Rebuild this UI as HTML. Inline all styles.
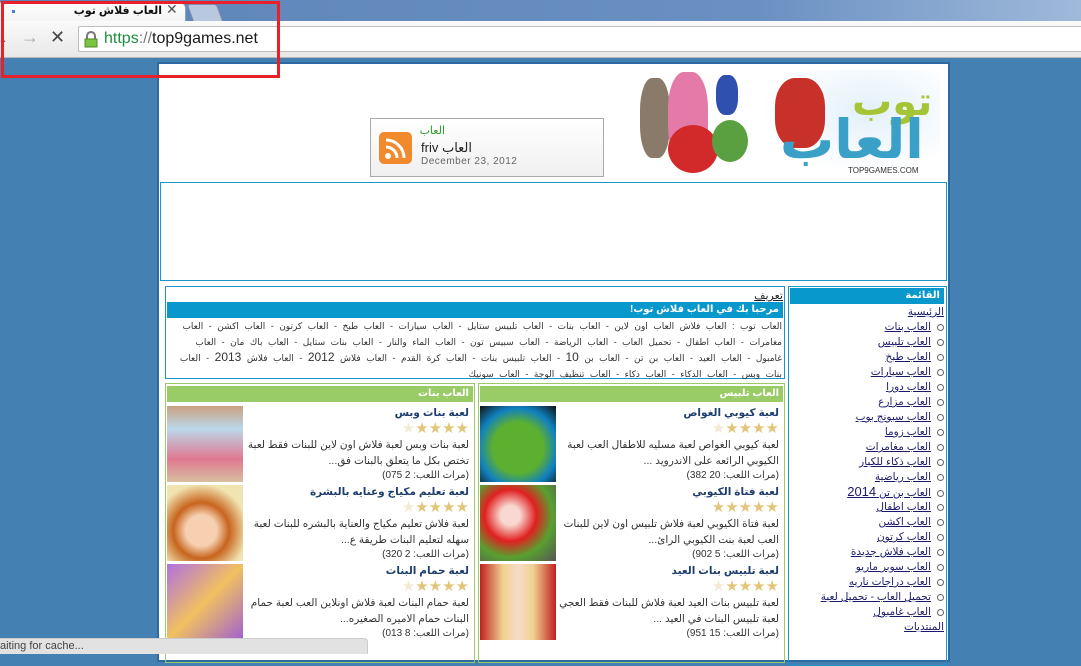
<!DOCTYPE html>
<html><head><meta charset="utf-8">
<style>
*{margin:0;padding:0;box-sizing:border-box}
body{width:1081px;height:654px;overflow:hidden;position:relative;background:#4580b3;font-family:"Liberation Sans","DejaVu Sans",sans-serif;font-size:11px;color:#333}
.a{position:absolute}
.ar{direction:rtl;text-align:right}
.tabbar{left:0;top:0;width:1081px;height:24px;background:linear-gradient(90deg,#5d84b8 0%,#6a90c2 70%,#9fb9da 100%)}
.toolbar{left:0;top:21px;width:1081px;height:37px;background:linear-gradient(#fafafa,#e8e8e8);border-bottom:1px solid #b8b8b8}
.omni{left:78px;top:26px;width:1010px;height:26px;background:#fff;border:1px solid #bdbdbd;border-radius:2px}
.page{left:157px;top:62px;width:793px;height:600px;background:#fff;border:2px solid #2d6aa2}
.bl{border:1px solid #1b95c8}
.gb{border:1px solid #99cc66}
.ghead{background:#99cc66;color:#fff;font-weight:bold;height:16px;line-height:16px;padding-right:4px;font-size:10px}
.bhead{background:#0898cc;color:#fff;font-weight:bold;height:16px;line-height:16px;padding-right:4px}
.menu a{display:block;color:#1a1a6a;text-decoration:underline;height:15px;line-height:15px;font-size:10.5px;overflow:hidden;white-space:nowrap}
.menu a.b::before{content:"";display:inline-block;width:5px;height:5px;border:1px solid #666;border-radius:50%;margin-left:6px;vertical-align:middle}
.game{position:absolute;height:79px}
.game .img{position:absolute;width:76px;height:76px}
.game .t{font-weight:bold;color:#1d3d6d;font-size:10.5px;line-height:14px}
.stars{color:#e3c57a;font-size:15px;line-height:17px}
.game p{font-size:10.5px;line-height:16px;color:#333;letter-spacing:-0.2px}
</style></head><body>
<div class="a tabbar"></div>
<div class="a" style="left:-10px;top:2px;width:196px;height:24px;background:linear-gradient(#fdfdfd,#f2f2f2);border-radius:6px 6px 0 0;border:1px solid #8aa4c8"></div>
<div class="a" style="left:12px;top:10px;width:3px;height:3px;background:#4a7fd8"></div>
<div class="a ar" style="left:60px;top:4px;width:102px;font-weight:bold;color:#111;font-size:11px;white-space:nowrap">العاب فلاش توب</div>
<div class="a" style="left:166px;top:1px;font-size:14px;color:#555">✕</div>
<div class="a" style="left:190px;top:4px;width:30px;height:18px;background:#b8c9df;border:1px solid #88a;transform:skewX(20deg);border-radius:3px 3px 0 0"></div>
<div class="a toolbar"></div>
<div class="a" style="left:0;top:30px;font-size:18px;color:#666">-</div>
<div class="a" style="left:21px;top:27px;font-size:18px;color:#aaa">→</div>
<div class="a" style="left:50px;top:27px;font-size:18px;color:#444;font-weight:bold">✕</div>
<div class="a omni"></div>
<svg class="a" style="left:84px;top:31px" width="14" height="17"><path d="M3 8V5a4 4 0 0 1 8 0v3" fill="none" stroke="#777" stroke-width="2"/><rect x="1" y="8" width="12" height="8" fill="#7cc342" stroke="#4e8a28"/></svg>
<div class="a" style="left:104px;top:30px;font-size:16px;color:#1a1a1a"><span style="color:#1e8f3e">https</span><span style="color:#777">://</span>top9games.net</div>

<div class="a page"></div>
<div class="a" style="left:370px;top:118px;width:234px;height:59px;border:1px solid #aaa;background:linear-gradient(#fff,#f0f0f0)"></div>
<div class="a" style="left:379px;top:132px;width:33px;height:32px;background:#f08a2c;border-radius:5px"></div>
<svg class="a" style="left:383px;top:136px" width="25" height="25"><circle cx="5" cy="20" r="3" fill="#fff"/><path d="M3 11a11 11 0 0 1 11 11M3 4a18 18 0 0 1 18 18" fill="none" stroke="#fff" stroke-width="3"/></svg>
<div class="a ar" style="left:415px;top:124px;width:30px;color:#2a9a2a;font-size:11px">العاب</div>
<div class="a" style="left:421px;top:140px;font-size:13px;color:#222">friv <span>العاب</span></div>
<div class="a" style="left:421px;top:156px;font-size:10px;color:#666;letter-spacing:.5px">December 23, 2012</div>
<div class="a" style="left:760px;top:70px;width:180px;height:104px;background:radial-gradient(ellipse at 60% 40%,#e2f0fa,#fff 70%)"></div>
<div class="a" style="left:640px;top:78px;width:30px;height:80px;background:#8a7a6a;border-radius:40%"></div>
<div class="a" style="left:668px;top:72px;width:40px;height:90px;background:#e47aa8;border-radius:40%"></div>
<div class="a" style="left:668px;top:125px;width:50px;height:48px;background:#d22a2a;border-radius:50%"></div>
<div class="a" style="left:712px;top:120px;width:36px;height:42px;background:#5aa040;border-radius:50%"></div>
<div class="a" style="left:716px;top:75px;width:22px;height:40px;background:#3050b0;border-radius:40%"></div>
<div class="a" style="left:775px;top:78px;width:50px;height:70px;background:#c8302a;border-radius:40%"></div>
<div class="a" style="left:852px;top:80px;font-size:40px;font-weight:bold;color:#a5c536;line-height:44px">توب</div>
<div class="a" style="left:780px;top:112px;font-size:54px;font-weight:bold;color:#3aa0c8;line-height:56px">العاب</div>
<div class="a" style="left:848px;top:166px;font-size:8px;color:#333">TOP9GAMES.COM</div>

<div class="a bl" style="left:160px;top:182px;width:787px;height:99px"></div>

<div class="a bl" style="left:165px;top:286px;width:620px;height:93px"></div>
<div class="a ar" style="left:700px;top:289px;width:83px;text-decoration:underline;color:#222">تعريف</div>
<div class="a bhead ar" style="left:167px;top:302px;width:616px;font-size:10px">مرحبا بك في العاب فلاش توب!</div>
<div class="a ar" style="left:170px;top:319px;width:612px;line-height:15.5px;font-size:9px;word-spacing:3px;color:#333">العاب توب : العاب فلاش العاب اون لاين - العاب بنات - العاب تلبيس ستايل - العاب سيارات - العاب طبخ - العاب كرتون - العاب اكشن - العاب مغامرات - العاب اطفال - تحميل العاب - العاب الرياضة - العاب سبيس تون - العاب الماء والنار - العاب بنات ستايل - العاب باك مان - العاب غامبول - العاب العيد - العاب بن تن - العاب بن <span style="font-size:12px">10</span> - العاب تلبيس بنات - العاب كرة القدم - العاب فلاش <span style="font-size:12px">2012</span> - العاب فلاش <span style="font-size:12px">2013</span> - العاب بنات وبس - العاب الذكاء - العاب ذكاء - العاب تنظيف الوجة - العاب سونيك</div>

<div class="a bl" style="left:788px;top:286px;width:159px;height:380px"></div>
<div class="a bhead ar" style="left:790px;top:288px;width:154px;font-size:10px">القائمة</div>
<div class="a menu ar" style="left:792px;top:305px;width:152px">
<a>الرئيسية</a><a class="b">العاب بنات</a><a class="b">العاب تلبيس</a><a class="b">العاب طبخ</a><a class="b">العاب سيارات</a><a class="b">العاب دورا</a><a class="b">العاب مزارع</a><a class="b">العاب سبونج بوب</a><a class="b">العاب زوما</a><a class="b">العاب مغامرات</a><a class="b">العاب ذكاء للكبار</a><a class="b">العاب رياضية</a><a class="b">العاب بن تن <span style="font-size:13px;line-height:13px">2014</span></a><a class="b">العاب اطفال</a><a class="b">العاب اكشن</a><a class="b">العاب كرتون</a><a class="b">العاب فلاش جديدة</a><a class="b">العاب سوبر ماريو</a><a class="b">العاب دراجات ناريه</a><a class="b">تحميل العاب - تحميل لعبة</a><a class="b">العاب غامبول</a><a>المنتديات</a>
</div>

<div class="a gb" style="left:165px;top:383px;width:310px;height:280px"></div>
<div class="a gb" style="left:478px;top:383px;width:307px;height:280px"></div>
<div class="a ghead ar" style="left:167px;top:386px;width:306px">العاب بنات</div>
<div class="a ghead ar" style="left:480px;top:386px;width:303px">العاب تلبيس</div>

<div class="game" style="left:167px;top:406px;width:306px"><div class="img" style="left:0;top:0;background:linear-gradient(#c8a080 0,#bcd8ea 30%,#e07890 70%,#d8c0a0)"></div>
<div class="ar" style="position:absolute;right:4px;top:0;width:222px"><div class="t">لعبة بنات وبس</div><div class="stars">★★★★<span style="color:#f2ead2">★</span></div><p>لعبة بنات وبس لعبة فلاش اون لاين للبنات فقط لعبة تختص بكل ما يتعلق بالبنات فق...</p><p style="font-size:10px;line-height:13px">(مرات اللعب: 2 075)</p></div></div>
<div class="game" style="left:167px;top:485px;width:306px"><div class="img" style="left:0;top:0;background:radial-gradient(circle at 45% 60%,#f6d0b0 25%,#c8641e 45%,#f0e4b0 75%)"></div>
<div class="ar" style="position:absolute;right:4px;top:0;width:222px"><div class="t">لعبة تعليم مكياج وعنايه بالبشرة</div><div class="stars">★★★★<span style="color:#f2ead2">★</span></div><p>لعبة فلاش تعليم مكياج والعناية بالبشره للبنات لعبة سهله لتعليم البنات طريقة ع...</p><p style="font-size:10px;line-height:13px">(مرات اللعب: 2 320)</p></div></div>
<div class="game" style="left:167px;top:564px;width:306px"><div class="img" style="left:0;top:0;background:linear-gradient(135deg,#b070e0,#f0c060 50%,#a060d0)"></div>
<div class="ar" style="position:absolute;right:4px;top:0;width:222px"><div class="t">لعبة حمام البنات</div><div class="stars">★★★★<span style="color:#f2ead2">★</span></div><p>لعبة حمام البنات لعبة فلاش اونلاين العب لعبة حمام البنات حمام الاميره الصغيره...</p><p style="font-size:10px;line-height:13px">(مرات اللعب: 8 013)</p></div></div>

<div class="game" style="left:480px;top:406px;width:303px"><div class="img" style="left:0;top:0;background:radial-gradient(circle at 50% 55%,#5cb030 45%,#1080c0 70%,#111)"></div>
<div class="ar" style="position:absolute;right:4px;top:0;width:220px"><div class="t">لعبة كيوبي الغواص</div><div class="stars">★★★★<span style="color:#f2ead2">★</span></div><p>لعبة كيوبي الغواص لعبة مسليه للاطفال العب لعبة الكيوبي الرائعه على الاندرويد ...</p><p style="font-size:10px;line-height:13px">(مرات اللعب: 20 382)</p></div></div>
<div class="game" style="left:480px;top:485px;width:303px"><div class="img" style="left:0;top:0;background:radial-gradient(circle at 40% 40%,#f8d8d0 15%,#e02020 40%,#58a030 65%,#555)"></div>
<div class="ar" style="position:absolute;right:4px;top:0;width:220px"><div class="t">لعبة فتاة الكيوبي</div><div class="stars">★★★★★</div><p>لعبة فتاة الكيوبي لعبة فلاش تلبيس اون لاين للبنات العب لعبة بنت الكيوبي الرائ...</p><p style="font-size:10px;line-height:13px">(مرات اللعب: 5 902)</p></div></div>
<div class="game" style="left:480px;top:564px;width:303px"><div class="img" style="left:0;top:0;background:linear-gradient(90deg,#c02020,#f0d090 30%,#f6dcc8 50%,#f0d090 70%,#c02020)"></div>
<div class="ar" style="position:absolute;right:4px;top:0;width:220px"><div class="t">لعبة تلبيس بنات العيد</div><div class="stars">★★★★<span style="color:#f2ead2">★</span></div><p>لعبة تلبيس بنات العيد لعبة فلاش للبنات فقط العجي لعبة تلبيس البنات في العيد ...</p><p style="font-size:10px;line-height:13px">(مرات اللعب: 15 951)</p></div></div>

<div class="a" style="left:0;top:638px;width:368px;height:16px;background:#e2e2e2;border-top:1px solid #ccc;border-right:1px solid #ccc;border-radius:0 4px 0 0"></div>
<div class="a" style="left:0;top:640px;font-size:11px;color:#444">aiting for cache...</div>

<div class="a" style="left:1px;top:1px;width:279px;height:77px;border:3px solid #e8202a"></div>
</body></html>
